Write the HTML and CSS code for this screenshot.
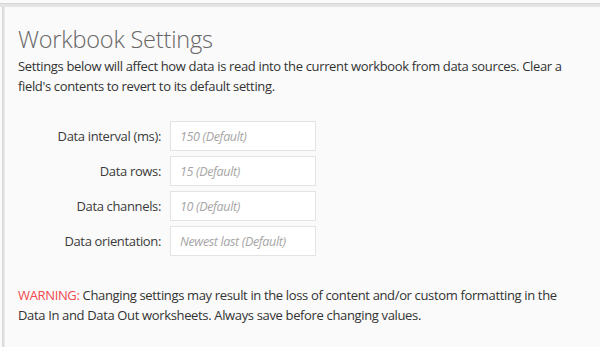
FILE: index.html
```html
<!DOCTYPE html>
<html lang="en">
<head>
    <meta charset="UTF-8">
    <meta name="viewport" content="width=device-width, initial-scale=1.0">
    <title>Workbook Settings</title>
    <link rel="stylesheet" href="styles.css">
</head>
<body>
    <div class="sheet">
        <div class="ruler-top"></div>
        <div class="pane">
            <div class="ruler-left"></div>
            <div class="settings">
                <h1>Workbook Settings</h1>
                <p class="intro">Settings below will affect how data is read into the current workbook from data sources. Clear a field's contents to revert to its default setting.</p>

                <div class="form">
                    <label for="interval">Data interval (ms):</label>
                    <input id="interval" type="text" placeholder="150 (Default)">
                    <label for="rows">Data rows:</label>
                    <input id="rows" type="text" placeholder="15 (Default)">
                    <label for="channels">Data channels:</label>
                    <input id="channels" type="text" placeholder="10 (Default)">
                    <label for="orientation">Data orientation:</label>
                    <input id="orientation" type="text" placeholder="Newest last (Default)">
                </div>

                <p class="warning"><span class="warn-label">WARNING:</span> Changing settings may result in the loss of content and/or custom formatting in the Data In and Data Out worksheets. Always save before changing values.</p>
            </div>
        </div>
    </div>
</body>
</html>
```

FILE: styles.css
```css
html, body {
    margin: 0;
    padding: 0;
    background: #ffffff;
}
body {
    font-family: "Open Sans", "Noto Sans", sans-serif;
    color: #333;
}
.sheet {
    width: 600px;
    height: 347px;
    overflow: hidden;
    background: #fafafa;
}
.ruler-top {
    height: 3px;
    margin-top: 3px;
    background: #e4e4e4;
    border-top: 1px solid #d6d6d6;
}
.pane {
    display: flex;
    height: 340px;
}
.ruler-left {
    width: 2px;
    margin-left: 2px;
    background: #dcdcdc;
    border-right: 1px solid #ebebeb;
}
.settings {
    padding: 0 0 0 13px;
}
h1 {
    margin: 17px 0 0;
    font-size: 23.5px;
    font-weight: 300;
    color: #666;
    line-height: 30px;
    letter-spacing: -0.2px;
}
.intro {
    margin: 2px 0 0;
    font-size: 13px;
    line-height: 20px;
    letter-spacing: -0.35px;
    width: 556px;
}
.form {
    display: grid;
    grid-template-columns: 143px 146px;
    column-gap: 9px;
    row-gap: 5px;
    margin-top: 25px;
    align-items: center;
}
label {
    text-align: right;
    font-size: 13px;
    letter-spacing: -0.35px;
    color: #3a3a3a;
}
input {
    box-sizing: border-box;
    height: 30px;
    width: 146px;
    margin: 0;
    padding: 0 9px;
    border: 1px solid #e3e3e3;
    background: #fff;
    font-family: inherit;
    font-size: 12.5px;
    letter-spacing: -0.35px;
}
input::placeholder {
    color: #a6a6a6;
    font-style: italic;
}
.warning {
    margin: 29px 0 0;
    font-size: 13px;
    line-height: 20px;
    letter-spacing: -0.35px;
    width: 556px;
}
.warn-label {
    color: #f0484f;
}
```
